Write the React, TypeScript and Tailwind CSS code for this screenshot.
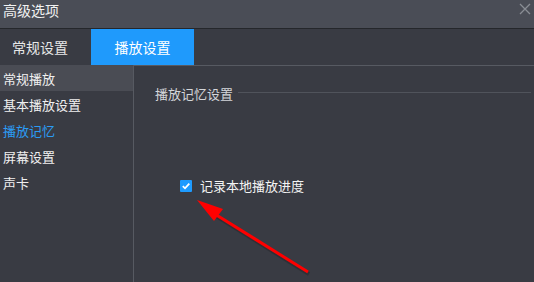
import React from "react";

export default function App() {
  const items = ["常规播放", "基本播放设置", "播放记忆", "屏幕设置", "声卡"];
  return (
    <div
      className="relative w-[534px] h-[282px] overflow-hidden bg-[#393b43] flex flex-col text-white"
      style={{ fontFamily: '"Noto Sans CJK SC", "Noto Sans", sans-serif' }}
    >
      <div className="h-[28px] bg-[#4a4d56] flex items-start justify-between pl-[3px] pr-[3px]">
        <span className="text-[14px] leading-[18px] mt-[1px] text-[#f2f2f2]">高级选项</span>
        <svg width="12" height="12" viewBox="0 0 12 12" className="mt-[3px]">
          <path d="M1 1 L11 11 M11 1 L1 11" stroke="#8a8d94" strokeWidth="1.3" />
        </svg>
      </div>
      <div className="h-px bg-[#25272b]" />
      <div className="h-[36px] flex items-stretch text-[14px]">
        <div className="w-[91px] flex items-center pl-[12px] text-[#e8e8e8]">常规设置</div>
        <div className="w-[103px] flex items-center justify-center bg-[#1f9afc] text-white">播放设置</div>
      </div>
      <div className="flex flex-1">
        <div className="w-[133px] flex flex-col text-[13px]">
          {items.map((t, i) => (
            <div
              key={t}
              className={
                "h-[26px] flex items-center pl-[3px] pt-[2px] " +
                (i === 0 ? "bg-[#4a4c54] text-[#f0f0f0]" : i === 2 ? "text-[#2b9cf5]" : "text-[#f0f0f0]")
              }
            >
              {t}
            </div>
          ))}
        </div>
        <div className="flex-1 border-l border-t border-[#575a62] flex flex-col">
          <div className="mt-[21px] h-[14px] flex items-center pl-[21px] pr-[3px] text-[13px] text-[#d4d6da]">
            <span>播放记忆设置</span>
            <div className="flex-1 h-px bg-[#50535b] ml-[5px] -mt-[4px]" />
          </div>
          <div className="mt-[78px] h-[14px] flex items-center pl-[46px] text-[13px] text-[#f4f4f4]">
            <div className="w-[12px] h-[12px] bg-[#1e9bff] rounded-[1px] flex items-center justify-center">
              <svg width="10" height="10" viewBox="0 0 10 10">
                <path d="M1.8 5.2 L4 7.3 L8.3 2.6" stroke="#ffffff" strokeWidth="1.8" fill="none" />
              </svg>
            </div>
            <span className="ml-[8px]">记录本地播放进度</span>
          </div>
        </div>
      </div>
      <svg className="absolute left-0 top-0" width="534" height="282" viewBox="0 0 534 282">
        <line x1="308" y1="272" x2="212" y2="212" stroke="#1c1d20" strokeOpacity="0.35" strokeWidth="4" transform="translate(1,2)" />
        <line x1="308" y1="272" x2="210" y2="211" stroke="#ff0000" strokeWidth="3" />
        <polygon points="197,200 223,209 214,221" fill="#ff0000" />
      </svg>
    </div>
  );
}
